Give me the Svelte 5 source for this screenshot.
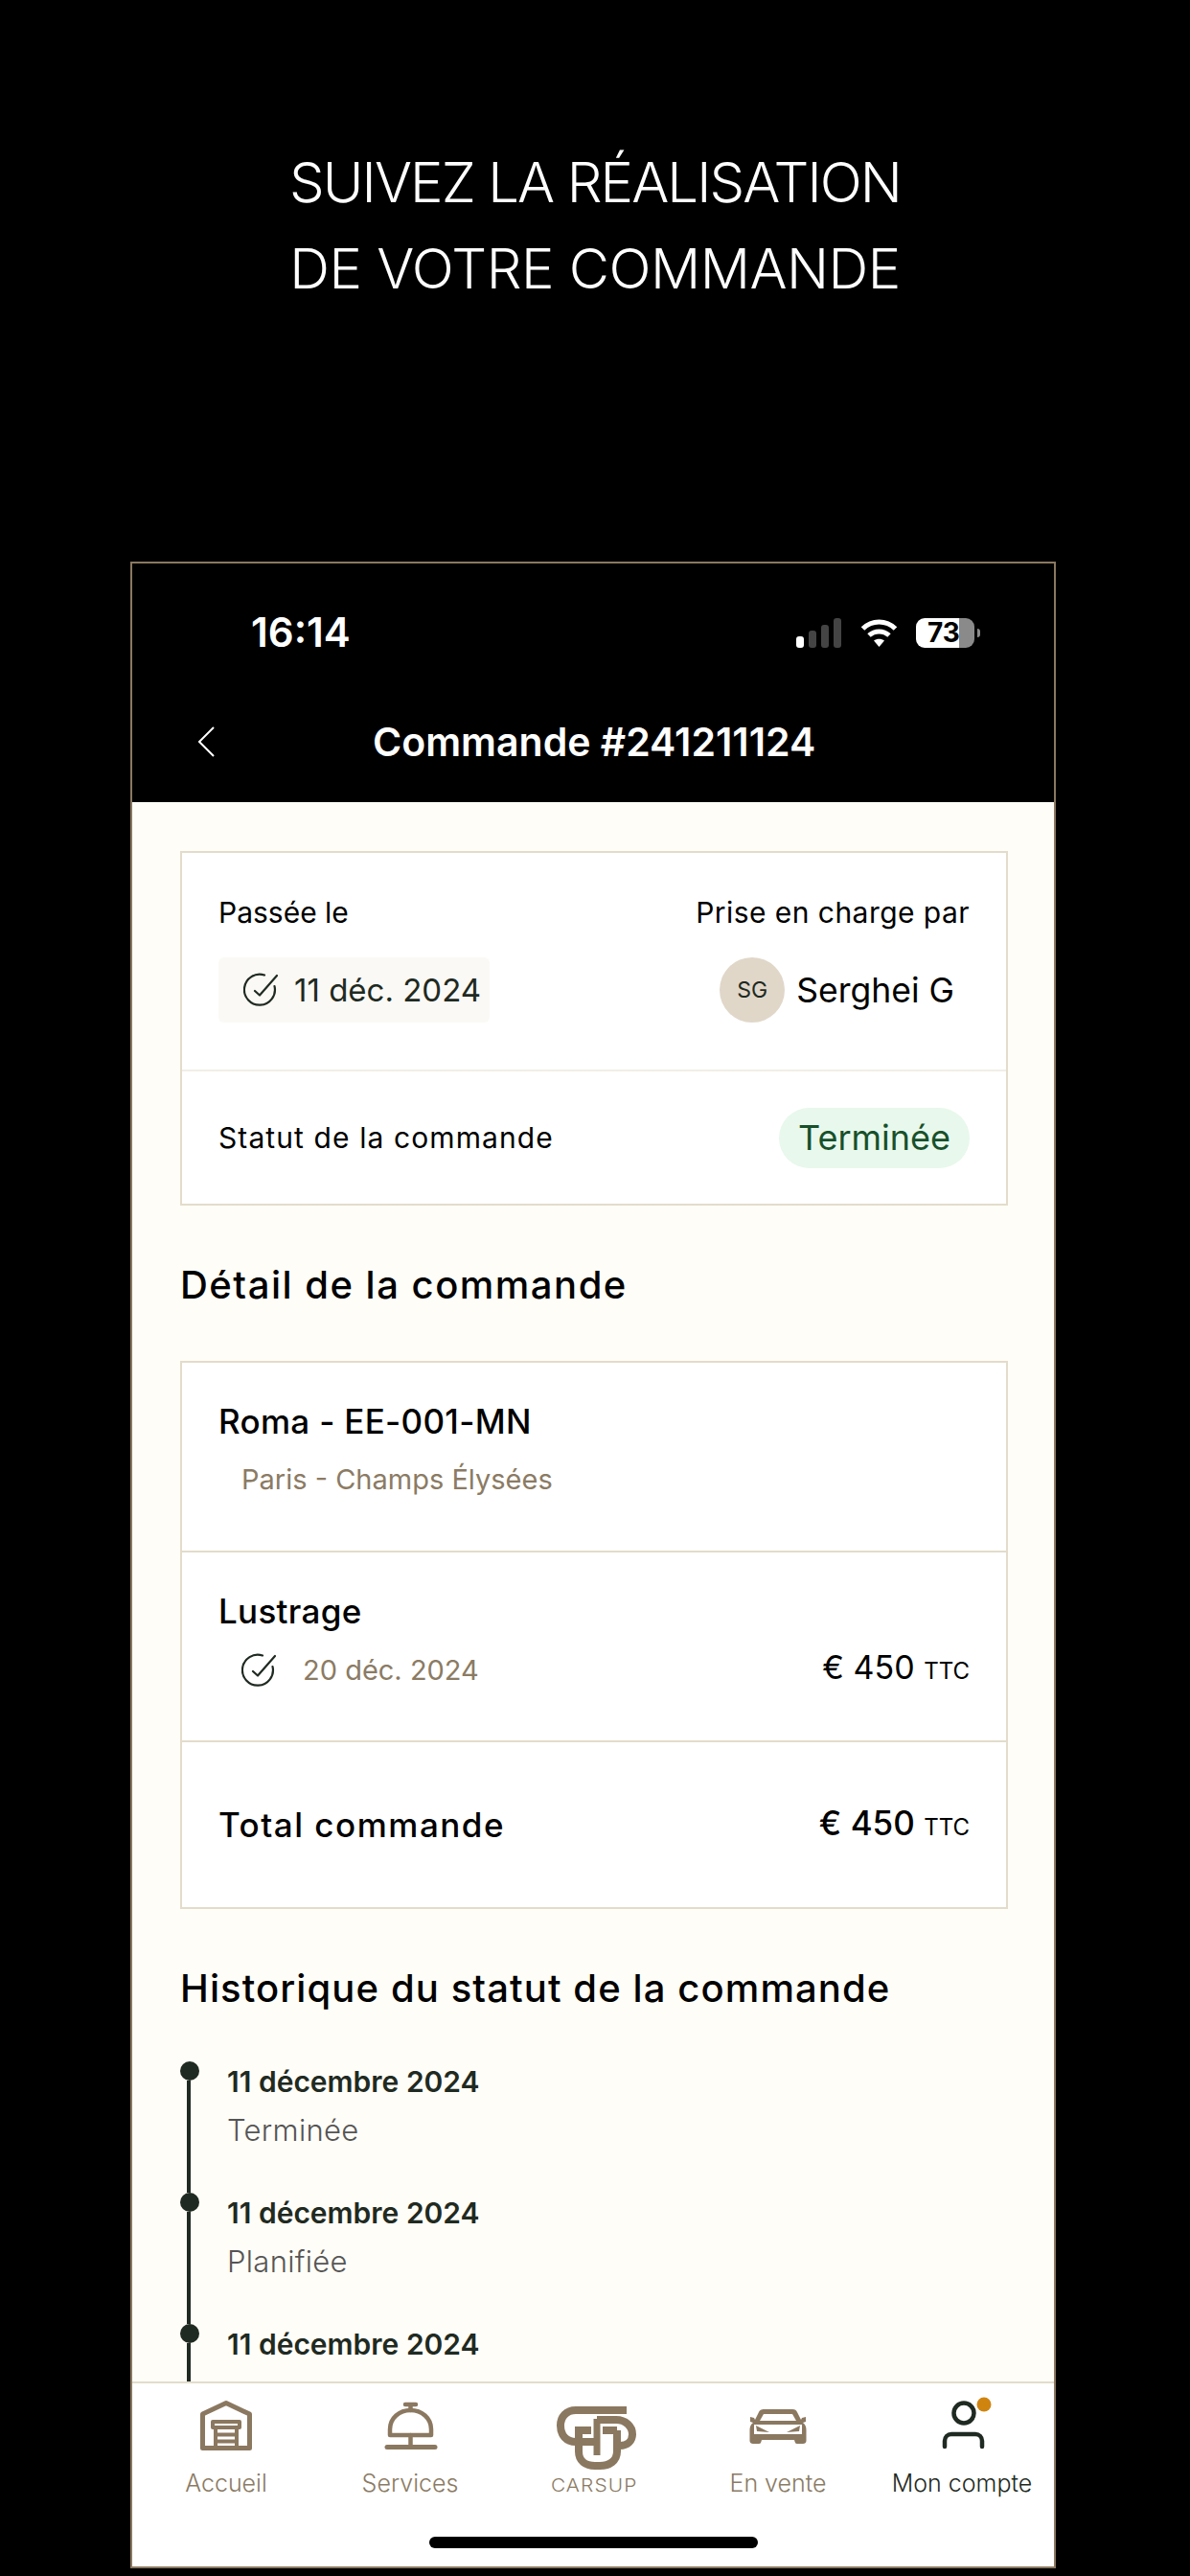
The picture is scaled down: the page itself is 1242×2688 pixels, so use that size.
<script>
  const history = [
    { date: '11 décembre 2024', status: 'Terminée' },
    { date: '11 décembre 2024', status: 'Planifiée' },
    { date: '11 décembre 2024', status: '' }
  ];
</script>

{#snippet check()}
  <svg class="check" viewBox="0 0 36 36" fill="none" stroke="#1f2a22" stroke-width="2.2" stroke-linecap="round" stroke-linejoin="round">
    <path d="M22 2.5A16 16 0 1 0 32.5 14" />
    <path d="M12 19l5 4.5L35 3" />
  </svg>
{/snippet}

<div class="page">
  <header class="hero">
    <div class="hero-a">SUIVEZ LA RÉALISATION</div>
    <div class="hero-b">DE VOTRE COMMANDE</div>
  </header>

  <div class="phone">
    <div class="topbar">
      <div class="status">
        <span class="time">16:14</span>
        <div class="status-icons">
          <div class="signal"><i class="on b1"></i><i class="b2"></i><i class="b3"></i><i class="b4"></i></div>
          <svg class="wifi" viewBox="0 0 39 30" fill="none" stroke="#fff" stroke-width="5">
            <path d="M2.5 11C12 1.5 27 1.5 36.5 11" />
            <path d="M9 18C15 12.5 24 12.5 30 18" />
            <path d="M14 23.5C17 21 22 21 25 23.5L19.5 30Z" fill="#fff" stroke="none" />
          </svg>
          <div class="battery"><span>73</span></div>
          <i class="cap"></i>
        </div>
      </div>
      <div class="nav">
        <svg class="back" viewBox="0 0 18 32" fill="none" stroke="#fff" stroke-width="2"><path d="M17 1L2 16L17 31" /></svg>
        <h1>Commande #241211124</h1>
      </div>
    </div>

    <main class="content">
      <section class="card">
        <div class="row-top">
          <div class="col">
            <span class="label">Passée le</span>
            <div class="chip">
              {@render check()}
              <span>11 déc. 2024</span>
            </div>
          </div>
          <div class="col right">
            <span class="label prise">Prise en charge par</span>
            <div class="owner">
              <span class="avatar">SG</span>
              <span class="owner-name">Serghei G</span>
            </div>
          </div>
        </div>
        <div class="row-status">
          <span class="label statut">Statut de la commande</span>
          <span class="pill">Terminée</span>
        </div>
      </section>

      <h2 class="h-detail">Détail de la commande</h2>

      <section class="card">
        <div class="d-row d-car">
          <div class="d-title">Roma - EE-001-MN</div>
          <div class="d-sub place">Paris - Champs Élysées</div>
        </div>
        <div class="d-row d-service">
          <div class="d-title">Lustrage</div>
          <div class="d-line">
            <div class="d-date">
              {@render check()}
              <span class="d-sub">20 déc. 2024</span>
            </div>
            <div class="price">€ 450 <small>TTC</small></div>
          </div>
        </div>
        <div class="d-total">
          <span class="d-title total">Total commande</span>
          <div class="price strong">€ 450 <small>TTC</small></div>
        </div>
      </section>

      <h2 class="h-history">Historique du statut de la commande</h2>

      <ol class="timeline">
        {#each history as item}
          <li>
            <div class="rail"><i class="dot"></i><i class="stem"></i></div>
            <div>
              <div class="t-date">{item.date}</div>
              {#if item.status}<div class="t-status">{item.status}</div>{/if}
            </div>
          </li>
        {/each}
      </ol>
    </main>

    <footer class="tabbar">
      <nav class="tabs">
        <div class="tab">
          <svg viewBox="0 0 76 76" fill="none" stroke="#8b7860" stroke-width="5" stroke-linejoin="round" stroke-linecap="round">
            <path d="M13.5 55.5V20L38 8.5L62.5 20V55.5Z" />
            <rect x="24" y="28" width="28" height="6" stroke-width="4" />
            <path d="M27 34V55M49 34V55M27 41.5H49M27 48.5H49" stroke-width="4" />
          </svg>
          <span>Accueil</span>
        </div>
        <div class="tab">
          <svg viewBox="0 0 76 76" fill="none" stroke="#8b7860" stroke-width="4.5" stroke-linejoin="round" stroke-linecap="round">
            <path d="M33 10H44M38.5 10V16" />
            <path d="M17 42V36C17 24 27 16 38.5 16C50 16 60 24 60 36V42Z" />
            <path d="M38.5 42V54" />
            <path d="M14 54.5H64" stroke-width="5" />
          </svg>
          <span>Services</span>
        </div>
        <div class="tab">
          <svg viewBox="0 0 76 76" fill="none" stroke="#8b7860" stroke-width="8">
            <g transform="translate(-1 12)">
              <path d="M73 4H20C10 4 4 11 4 20C4 30 10 37 20 37H42" />
              <path d="M42 14H62C72 14 79 21 79 29C79 36 74 41 66 41" />
              <path d="M42 13V51" stroke-width="7" />
              <path d="M19 25H36M48 25H63M23 25V47C23 57 30 62 40 62H45C55 62 63 57 63 47V25" />
            </g>
          </svg>
          <span class="brand">CARSUP</span>
        </div>
        <div class="tab">
          <svg viewBox="0 0 76 76">
            <path fill="#8b7860" d="M24 15H53C56 15 57 16 58 18L62 26L63 24L67 23V28L64 29C67 31 67.5 34 67.5 37V48C67.5 50 66 51 64 51H58C56 51 56 50 55 47H21C20 50 20 51 18 51H12C10 51 8.5 50 8.5 48V37C8.5 34 9 31 12 29L9 28V23L13 24L14 26L18 18C19 16 20 15 24 15Z" />
            <path fill="#fff" d="M23 20H53L57 27H19ZM13 31H63V41H13Z" />
            <path fill="#8b7860" d="M15 32L29 39L16 38ZM61 32L47 39L60 38Z" />
          </svg>
          <span>En vente</span>
        </div>
        <div class="tab active">
          <svg viewBox="0 0 76 76" fill="none" stroke="#1f2a22" stroke-width="4.5" stroke-linecap="round">
            <circle cx="40" cy="19" r="10.5" />
            <path d="M20 54V48C20 44 23 41 27 41H52C56 41 59 44 59 48V54" />
            <circle cx="61" cy="10" r="7.5" fill="#d08410" stroke="none" />
          </svg>
          <span>Mon compte</span>
        </div>
      </nav>
      <div class="home"></div>
    </footer>
  </div>
</div>

<style>
  :global(body) {
    margin: 0;
    background: #000;
  }
  .page {
    width: 1242px;
    height: 2688px;
    overflow: hidden;
    background: #000;
    font-family: Inter, "Noto Sans", sans-serif;
    color: #000;
  }
  .hero {
    height: 441px;
    padding-top: 145px;
    color: #fff;
    text-align: center;
    font-size: 58px;
    font-weight: 300;
    line-height: 90px;
  }
  .hero-a { letter-spacing: -1.9px; }
  .hero-b { letter-spacing: -0.5px; }
  .phone {
    box-sizing: border-box;
    width: 966px;
    height: 2094px;
    margin-left: 136px;
    border: 2px solid #8a7860;
    display: flex;
    flex-direction: column;
    overflow: hidden;
  }
  .topbar {
    flex: none;
    height: 249px;
    background: #000;
    color: #fff;
    box-sizing: border-box;
    padding-top: 52px;
  }
  .status {
    height: 40px;
    padding: 0 77px 0 124px;
    display: flex;
    align-items: center;
    justify-content: space-between;
  }
  .time {
    font-size: 42px;
    font-weight: 600;
    line-height: 42px;
  }
  .status-icons {
    display: flex;
    align-items: center;
    height: 40px;
  }
  .signal {
    display: flex;
    align-items: flex-end;
    gap: 5px;
    height: 31px;
    margin-right: 20px;
  }
  .signal i {
    width: 8px;
    background: #444;
    border-radius: 3px;
  }
  .signal .on { background: #fff; }
  .b1 { height: 12px; }
  .b2 { height: 18px; }
  .b3 { height: 24px; }
  .b4 { height: 31px; }
  .wifi {
    width: 39px;
    height: 30px;
    margin-right: 19px;
  }
  .battery {
    width: 61px;
    height: 31px;
    border-radius: 9px;
    background: linear-gradient(90deg, #fff 74%, #8a8a8a 74%);
    color: #000;
    font-size: 28px;
    font-weight: 700;
    line-height: 31px;
    padding-left: 12px;
    box-sizing: border-box;
  }
  .cap {
    width: 3px;
    height: 9px;
    margin-left: 3px;
    background: #8a8a8a;
    border-radius: 0 3px 3px 0;
  }
  .nav {
    height: 157px;
    box-sizing: border-box;
    padding: 30px 0 0 68px;
    display: flex;
    align-items: center;
  }
  .back {
    width: 18px;
    height: 32px;
    flex: none;
  }
  h1 {
    margin: 0 0 0 165px;
    font-size: 41px;
    font-weight: 600;
    line-height: 50px;
    white-space: nowrap;
  }
  .content {
    flex: 1;
    min-height: 0;
    overflow: hidden;
    background: #fffdf7;
    padding: 51px 48px 0 50px;
  }
  .card {
    box-sizing: border-box;
    border: 2px solid #e3dccb;
    background: #fff;
  }
  .label {
    font-size: 30px;
    line-height: 40px;
    white-space: nowrap;
  }
  .prise { letter-spacing: 0.45px; }
  .statut { letter-spacing: 1.1px; }
  .row-top {
    height: 228px;
    box-sizing: border-box;
    padding: 42px 38px 0;
    border-bottom: 2px solid #f1eee6;
    display: flex;
    justify-content: space-between;
  }
  .col {
    display: flex;
    flex-direction: column;
    align-items: flex-start;
    gap: 27px;
  }
  .col.right { align-items: flex-end; }
  .chip {
    width: 283px;
    height: 68px;
    box-sizing: border-box;
    padding-left: 26px;
    display: flex;
    align-items: center;
    gap: 17px;
    background: #faf9f5;
    border-radius: 6px;
    color: #1f2a22;
    font-size: 33px;
    white-space: nowrap;
  }
  .check {
    width: 36px;
    height: 36px;
    flex: none;
  }
  .owner {
    display: flex;
    align-items: center;
    gap: 12px;
    padding-right: 16px;
  }
  .avatar {
    width: 68px;
    height: 68px;
    border-radius: 50%;
    background: #e0d7c9;
    display: flex;
    align-items: center;
    justify-content: center;
    font-size: 23px;
    color: #1f2a22;
  }
  .owner-name {
    font-size: 35.5px;
    white-space: nowrap;
  }
  .row-status {
    height: 138px;
    padding: 0 38px;
    display: flex;
    align-items: center;
    justify-content: space-between;
  }
  .pill {
    width: 199px;
    height: 63px;
    border-radius: 32px;
    background: #e8f8ec;
    color: #17502b;
    font-size: 36px;
    display: flex;
    align-items: center;
    justify-content: center;
  }
  h2 {
    margin: 0;
    font-size: 40px;
    font-weight: 500;
    line-height: 50px;
    white-space: nowrap;
  }
  .h-detail {
    margin: 58px 0 54px;
    letter-spacing: 1.5px;
  }
  .h-history {
    margin: 58px 0 51px;
    letter-spacing: 1.1px;
  }
  .d-row {
    box-sizing: border-box;
    height: 198px;
    padding: 41px 38px 0;
    border-bottom: 2px solid #e3dccb;
  }
  .d-service {
    padding-top: 41px;
  }
  .d-title {
    font-size: 35px;
    font-weight: 500;
    line-height: 40px;
    white-space: nowrap;
    letter-spacing: 0.3px;
  }
  .d-title.total {
    letter-spacing: 1.5px;
  }
  .d-sub {
    color: #8b7b64;
    font-size: 29px;
    line-height: 40px;
    white-space: nowrap;
  }
  .place {
    margin-top: 21px;
    padding-left: 24px;
  }
  .d-line {
    margin-top: 20px;
    display: flex;
    align-items: center;
    justify-content: space-between;
  }
  .d-date {
    display: flex;
    align-items: center;
    gap: 28px;
    padding-left: 24px;
  }
  .price {
    font-size: 34px;
    line-height: 40px;
    white-space: nowrap;
    position: relative;
    top: -1px;
  }
  .price.strong {
    font-size: 35px;
    font-weight: 500;
    top: 0;
  }
  .price small {
    font-size: 24px;
    font-weight: 400;
  }
  .d-total {
    height: 172px;
    padding: 0 38px;
    display: flex;
    align-items: center;
    justify-content: space-between;
  }
  .timeline {
    list-style: none;
    margin: 0;
    padding: 0;
  }
  .timeline li {
    height: 137px;
    display: flex;
    gap: 29px;
  }
  .rail {
    width: 20px;
    display: flex;
    flex-direction: column;
    align-items: center;
  }
  .dot {
    width: 20px;
    height: 20px;
    flex: none;
    border-radius: 50%;
    background: #1f2a22;
  }
  .stem {
    width: 4px;
    flex: 1;
    background: #1f2a22;
    margin-right: 3px;
  }
  .t-date {
    padding-top: 1px;
    color: #1f2a22;
    font-size: 30px;
    font-weight: 600;
    line-height: 40px;
    white-space: nowrap;
  }
  .t-status {
    margin-top: 11px;
    color: #555;
    font-size: 31px;
    font-weight: 300;
    letter-spacing: 0.3px;
    line-height: 40px;
  }
  .tabbar {
    flex: none;
    height: 193px;
    box-sizing: border-box;
    border-top: 2px solid #e3dccb;
    background: #fff;
    padding-top: 12px;
    display: flex;
    flex-direction: column;
    align-items: center;
  }
  .tabs {
    box-sizing: border-box;
    width: 100%;
    height: 108px;
    padding-left: 2px;
    display: grid;
    grid-template-columns: repeat(5, 1fr);
  }
  .tab {
    display: flex;
    flex-direction: column;
    align-items: center;
    color: #8b7b64;
    font-size: 25px;
    font-weight: 350;
    line-height: 32px;
    white-space: nowrap;
  }
  .tab svg {
    width: 76px;
    height: 76px;
    overflow: visible;
    flex: none;
  }
  .tab.active { color: #1f2a22; }
  .brand {
    font-size: 19px;
    letter-spacing: 1px;
    position: relative;
    top: 3px;
    transform: scaleX(1.1);
  }
  .home {
    width: 343px;
    height: 12px;
    margin-top: 40px;
    border-radius: 6px;
    background: #000;
  }
</style>
